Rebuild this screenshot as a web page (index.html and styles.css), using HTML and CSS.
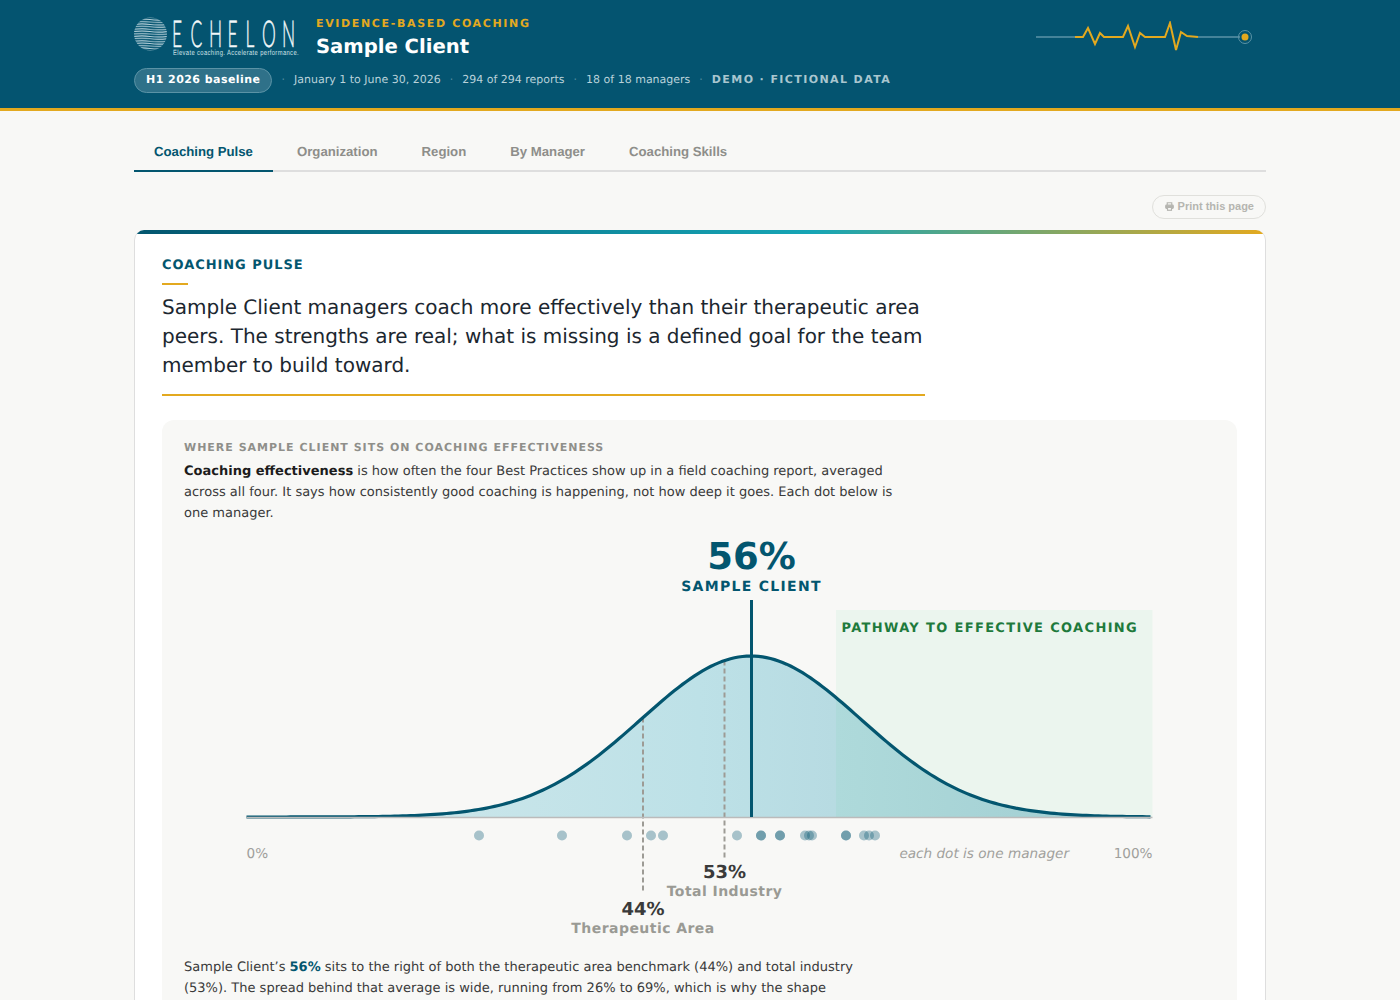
FILE: index.html
```html
<!DOCTYPE html>
<html lang="en">
<head>
    <meta charset="UTF-8">
    <title>Sample Client - Coaching Pulse</title>
    <link rel="stylesheet" href="styles.css">
</head>
<body>
    <!-- Header -->
    <header class="site-header">
        <div class="header-inner">
            <div class="header-top">
                <div class="brand">
                    <svg class="logo" width="168" height="44" viewBox="0 0 168 44">
                        <defs>
                            <pattern id="logoWaves" width="33" height="2.400" patternUnits="userSpaceOnUse">
                                <path d="M0 1.200q8 -.9 16 0t17 0" fill="none" stroke="#c9dee5" stroke-width="1"/>
                            </pattern>
                        </defs>
                        <circle cx="16.500" cy="18" r="16.500" fill="url(#logoWaves)"/>
                        <text class="logo-word" transform="scale(.47 1)" x="80.900 120.200 159.600 198.900 237.200 272.300 314.900" y="30.500">ECHELON</text>
                        <text class="logo-tag" x="39" y="39" textLength="126" lengthAdjust="spacingAndGlyphs">Elevate coaching. Accelerate performance.</text>
                    </svg>
                    <div class="brand-text">
                        <div class="eyebrow">EVIDENCE-BASED COACHING</div>
                        <h1>Sample Client</h1>
                    </div>
                </div>
                <svg class="pulse" width="216" height="32" viewBox="0 0 216 32">
                    <path class="pulse-base" d="M0 16H39M162 16H204"/>
                    <path class="pulse-beat" d="M39 16H47L52 7L59 23L64 12L68 16H87L92 5L99 26L104 12L109 16H129L134 2L140 29L145 11L151 15L162 16"/>
                    <circle class="pulse-ring" cx="209" cy="16" r="6.500"/>
                    <circle class="pulse-dot" cx="209" cy="16" r="3.500"/>
                </svg>
            </div>
            <div class="meta-row">
                <span class="period-pill">H1 2026 baseline</span>
                <span class="sep">·</span>
                <span>January 1 to June 30, 2026</span>
                <span class="sep">·</span>
                <span>294 of 294 reports</span>
                <span class="sep">·</span>
                <span>18 of 18 managers</span>
                <span class="sep">·</span>
                <span class="demo-tag">DEMO · FICTIONAL DATA</span>
            </div>
        </div>
    </header>

    <main class="page">
        <!-- Tabs -->
        <nav class="tabs">
            <a class="tab active">Coaching Pulse</a>
            <a class="tab">Organization</a>
            <a class="tab">Region</a>
            <a class="tab">By Manager</a>
            <a class="tab">Coaching Skills</a>
        </nav>

        <div class="print-row">
            <button class="print-btn">
                <svg width="9" height="9" viewBox="0 0 10 10" fill="none" stroke="#b5b5b0" stroke-width="1.300">
                    <path d="M2.500 3.500V.8h5v2.700"/>
                    <rect x=".8" y="3.500" width="8.400" height="3.700" rx="1" fill="#b5b5b0"/>
                    <rect x="2.800" y="6" width="4.400" height="3.200" fill="#f8f8f6"/>
                </svg>
                Print this page
            </button>
        </div>

        <section class="card">
            <div class="card-stripe"></div>
            <div class="card-body">
                <div class="section-label">COACHING PULSE</div>
                <div class="short-rule"></div>
                <p class="headline">Sample Client managers coach more effectively than their therapeutic area peers. The strengths are real; what is missing is a defined goal for the team member to build toward.</p>

                <div class="panel">
                    <div class="panel-label">WHERE SAMPLE CLIENT SITS ON COACHING EFFECTIVENESS</div>
                    <p class="panel-text"><strong>Coaching effectiveness</strong> is how often the four Best Practices show up in a field coaching report, averaged across all four. It says how consistently good coaching is happening, not how deep it goes. Each dot below is one manager.</p>

                    <!-- Dagilim grafigi, chart.js dolduruyor -->
                    <svg id="curveChart" class="curve-chart" width="1031" height="424" viewBox="0 0 1031 424"></svg>

                    <p class="panel-text summary">Sample Client’s <strong class="hl">56%</strong> sits to the right of both the therapeutic area benchmark (44%) and total industry (53%). The spread behind that average is wide, running from 26% to 69%, which is why the shape</p>
                </div>
            </div>
        </section>
    </main>

    <script src="chart.js"></script>
</body>
</html>
```

FILE: styles.css
```css
/* General */
* {
    box-sizing: border-box;
}

html, body {
    height: 1000px;
    overflow: hidden;
}

body {
    margin: 0;
    font-family: "DejaVu Sans", sans-serif;
    text-rendering: geometricPrecision;
    background-color: #f8f8f6;
    color: #1c2730;
}

/* Header */
.site-header {
    height: 111px;
    background: #045470;
    border-bottom: 3px solid #e3a91f;
    padding: 16px 134px 0;
}

.header-top {
    display: flex;
    justify-content: space-between;
    align-items: flex-start;
}

.brand {
    display: flex;
    align-items: flex-start;
}

.logo {
    display: block;
    overflow: visible;
}

.logo-word {
    font-family: "Lato", sans-serif;
    font-weight: 300;
    font-size: 37px;
    fill: #f2f8fa;
    stroke: #f2f8fa;
    stroke-width: .5;
}

.logo-tag {
    font-family: "Liberation Sans", sans-serif;
    font-size: 7.500px;
    letter-spacing: .5px;
    fill: #cfe2e8;
}

.brand-text {
    margin-left: 14px;
}

.eyebrow {
    margin-top: 1px;
    font-size: 11px;
    line-height: 14px;
    font-weight: 700;
    letter-spacing: 1.650px;
    color: #e3a91f;
}

h1 {
    margin: 3px 0 0;
    font-size: 19.600px;
    line-height: 26px;
    font-weight: 700;
    color: #fff;
}

.pulse {
    display: block;
    margin: 5px 14px 0 0;
}

.pulse-base {
    fill: none;
    stroke: #5b93a6;
    stroke-width: 1.500;
}

.pulse-beat {
    fill: none;
    stroke: #e3a91f;
    stroke-width: 2;
}

.pulse-ring {
    fill: none;
    stroke: #5b93a6;
    stroke-width: 1;
}

.pulse-dot {
    fill: #e3a91f;
}

.meta-row {
    display: flex;
    align-items: center;
    gap: 9px;
    margin-top: 8px;
    font-size: 11px;
    color: #b9d2da;
}

.meta-row span {
    margin-bottom: 2px;
}

.meta-row .period-pill {
    height: 25px;
    margin-bottom: 0;
    padding: 0 11px 2px;
    display: flex;
    align-items: center;
    border: 1px solid #5b93a6;
    border-radius: 13px;
    background: #2f7189;
    color: #fff;
    font-weight: 700;
    letter-spacing: .45px;
}

.sep {
    color: #5b93a6;
}

.demo-tag {
    font-weight: 700;
    letter-spacing: 1.400px;
    color: #a9c6cf;
}

/* Tabs */
.page {
    padding: 0 134px;
}

.tabs {
    display: flex;
    gap: 4px;
    height: 61px;
    padding-top: 22px;
    border-bottom: 2px solid #dedede;
}

.tab {
    height: 39px;
    padding: 11px 20px 0;
    font-family: "Liberation Sans", sans-serif;
    font-size: 13.200px;
    font-weight: 700;
    color: #8e8e8a;
}

.tab.active {
    color: #03566f;
    border-bottom: 2px solid #03566f;
}

/* Print button */
.print-row {
    display: flex;
    justify-content: flex-end;
    margin-top: 23px;
}

.print-btn {
    display: flex;
    align-items: center;
    gap: 4px;
    height: 24px;
    padding: 0 11px 2px 12px;
    border: 1px solid #e0e0dc;
    border-radius: 12px;
    background: transparent;
    font-family: "Liberation Sans", sans-serif;
    font-size: 11px;
    font-weight: 700;
    color: #b5b5b0;
}

/* Card */
.card {
    margin-top: 11px;
    background: #fff;
    border: 1px solid #dedede;
    border-top: none;
    border-radius: 10px;
    overflow: hidden;
}

.card-stripe {
    height: 4px;
    background: linear-gradient(to right, #03566f, #16a5b5 60%, #e3a91f);
}

.card-body {
    padding: 25px 28px 24px 27px;
}

.section-label {
    font-size: 13px;
    line-height: 14px;
    font-weight: 700;
    letter-spacing: .95px;
    color: #03566f;
}

.short-rule {
    width: 26px;
    height: 2px;
    margin-top: 10px;
    background: #e3a91f;
}

.headline {
    width: 763px;
    margin: 8px 0 0;
    padding-bottom: 14px;
    border-bottom: 2px solid #e3a91f;
    font-size: 20px;
    line-height: 29px;
}

.panel {
    margin-top: 24px;
    padding: 21px 22px 40px;
    border-radius: 12px;
    background: #f8f8f6;
}

.panel-label {
    font-size: 11px;
    line-height: 13px;
    font-weight: 700;
    letter-spacing: 1px;
    color: #8f8f8a;
}

.panel-text {
    width: 712px;
    margin: 7px 0 0;
    font-size: 13px;
    line-height: 21px;
    color: #3a3a3a;
}

.panel-text strong {
    color: #1c1c1c;
}

.panel-text strong.hl {
    color: #03566f;
}

.summary {
    margin-top: 3px;
}

/* Chart */
.curve-chart {
    display: block;
    margin-top: 6px;
    font-family: "DejaVu Sans", sans-serif;
}

.green-band {
    fill: #1fc671;
    fill-opacity: .06;
}

.pathway-label {
    font-size: 13px;
    font-weight: 700;
    letter-spacing: 1.350px;
    fill: #1e7a3c;
}

.baseline {
    stroke: #bbb;
    stroke-width: 1.500;
}

.curve-line {
    fill: none;
    stroke: #03566f;
    stroke-width: 3.200;
}

.client-line {
    stroke: #03566f;
    stroke-width: 3;
}

.bench-line {
    stroke: #9d9b95;
    stroke-width: 2;
    stroke-dasharray: 5 3;
}

.manager-dot {
    fill: #03566f;
    fill-opacity: .33;
}

.client-value {
    font-size: 37px;
    font-weight: 700;
    fill: #03566f;
    text-anchor: middle;
}

.client-name {
    font-size: 14px;
    font-weight: 700;
    letter-spacing: 1.300px;
    fill: #03566f;
    text-anchor: middle;
}

.bench-value {
    font-size: 18px;
    font-weight: 700;
    fill: #3a3a3a;
    text-anchor: middle;
}

.bench-name {
    font-size: 14px;
    font-weight: 700;
    letter-spacing: .45px;
    fill: #9a9a94;
    text-anchor: middle;
}

.axis-label {
    font-size: 13.600px;
    fill: #a0a09c;
}

.axis-note {
    font-style: italic;
}
```

FILE: chart.js
```js
// Grafik degerleri, x ve y svg icindeki koordinatlar
const chart = document.getElementById('curveChart');
const peakX = 567;
const peakHeight = 161;
const sigma = 110;
const baseY = 287;
const left = 62.5;
const right = 968.5;

const managers = [295, 378, 443, 467, 479, 553, 577, 577, 596, 596, 621, 625, 628, 662, 662, 680, 685, 691];

function curveY(x) {
    const d = x - peakX;
    return baseY - peakHeight * Math.exp(-(d * d) / (2 * sigma * sigma));
}

function curvePath() {
    let path = '';
    for (let x = left; x <= right; x += 4) {
        path += (path ? 'L' : 'M') + x + ' ' + curveY(x).toFixed(2);
    }
    return path;
}

const line = curvePath();
const dots = managers.map(x => `<circle class="manager-dot" cx="${x}" cy="305.500" r="5"/>`).join('');

chart.innerHTML = `
    <defs>
        <linearGradient id="areaFill" x1="0" x2="1" y1="0" y2="0">
            <stop offset="0" stop-color="#d3e9ec"/>
            <stop offset="0.5" stop-color="#bde1e7"/>
            <stop offset="1" stop-color="#a9cdd6"/>
        </linearGradient>
    </defs>
    <text class="client-value" x="567.500" y="39">56%</text>
    <text class="client-name" x="567.500" y="61">SAMPLE CLIENT</text>
    <path d="${line}L${right} ${baseY}L${left} ${baseY}Z" fill="url(#areaFill)"/>
    <rect class="green-band" x="652" y="80" width="316.500" height="207"/>
    <text class="pathway-label" x="657.500" y="102">PATHWAY TO EFFECTIVE COACHING</text>
    <line class="bench-line" x1="459" x2="459" y1="${curveY(459)}" y2="363"/>
    <line class="bench-line" x1="540.500" x2="540.500" y1="${curveY(540.5)}" y2="328"/>
    <path class="curve-line" d="${line}"/>
    <line class="baseline" x1="${left}" x2="${right}" y1="287.500" y2="287.500"/>
    <line class="client-line" x1="567.500" x2="567.500" y1="70" y2="${baseY}"/>
    ${dots}
    <text class="axis-label" x="62.500" y="328">0%</text>
    <text class="axis-label axis-note" x="885" y="328" text-anchor="end">each dot is one manager</text>
    <text class="axis-label" x="968.500" y="328" text-anchor="end">100%</text>
    <text class="bench-value" x="540.500" y="348">53%</text>
    <text class="bench-name" x="540.500" y="366">Total Industry</text>
    <text class="bench-value" x="459" y="385">44%</text>
    <text class="bench-name" x="459" y="403">Therapeutic Area</text>
`;
```
